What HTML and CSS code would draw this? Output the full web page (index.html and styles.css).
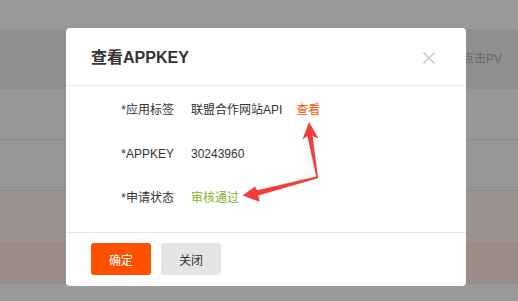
FILE: index.html
```html
<!DOCTYPE html>
<html lang="zh-CN">
<head>
<meta charset="utf-8">
<title>查看APPKEY</title>
<link rel="stylesheet" href="styles.css">
</head>
<body>
<div class="page">
  <div class="band band-top"></div>
  <div class="band band-head"><span class="head-text">点击PV</span></div>
  <div class="band band-row1"></div>
  <div class="band band-row2"></div>
  <div class="band band-row3"></div>
  <div class="band band-row4"></div>
  <div class="band band-bottom"></div>

  <div class="modal">
    <div class="modal-header">
      <h2 class="modal-title">查看APPKEY</h2>
      <span class="modal-close">
        <svg width="12" height="12" viewBox="0 0 12 12"><path d="M0.5 0.5 L11.5 11.5 M11.5 0.5 L0.5 11.5" stroke="#cccccc" stroke-width="1.6" fill="none"/></svg>
      </span>
    </div>
    <div class="modal-body">
      <div class="row">
        <span class="label">*应用标签</span>
        <span class="value">联盟合作网站API</span>
        <span class="link">查看</span>
      </div>
      <div class="row">
        <span class="label">*APPKEY</span>
        <span class="value">30243960</span>
      </div>
      <div class="row">
        <span class="label">*申请状态</span>
        <span class="value status">审核通过</span>
      </div>
    </div>
    <div class="modal-footer">
      <button class="btn btn-primary">确定</button>
      <button class="btn btn-default">关闭</button>
    </div>
  </div>

  <svg class="arrows" width="518" height="301" viewBox="0 0 518 301">
    <polygon points="309,122 318.5,138.5 312.6,136 318,177.5 316.4,177.5 307.4,136 302.5,139.5" fill="#f43d3d"/>
    <polygon points="242.5,195.5 255,186.5 257,190.3 317.5,176.2 318,178.2 258.3,195.6 259.8,201.8" fill="#f43d3d"/>
  </svg>
</div>
</body>
</html>
```

FILE: styles.css
```css
* { box-sizing: border-box; }
html, body {
  margin: 0;
  padding: 0;
}
body {
  font-family: "Liberation Sans", "Noto Sans CJK SC", sans-serif;
  font-size: 12px;
  color: #333;
  background: #999999;
}
.page {
  position: relative;
  width: 518px;
  height: 301px;
  overflow: hidden;
  display: flex;
  flex-direction: column;
}
.band { flex: none; width: 100%; }
.band-top { height: 29px; background: #999999; }
.band-head {
  height: 60px;
  background: #8f8f8f;
  display: flex;
  align-items: center;
  padding-left: 462px;
}
.head-text { color: #686868; font-size: 12px; line-height: 14px; margin-top: -1px; }
.band-row1 { height: 51px; background: #979797; border-bottom: 1px solid #8a8a8a; }
.band-row2 { height: 51px; background: #969696; border-bottom: 1px solid #8a8a8a; }
.band-row3 { height: 51px; background: #9a9390; }
.band-row4 { height: 42px; background: #9b8c88; }
.band-bottom { flex: 1; background: #999999; }

.modal {
  position: absolute;
  left: 66px;
  top: 28px;
  width: 400px;
  height: 258px;
  background: #fff;
  border-radius: 4px;
  display: flex;
  flex-direction: column;
}
.modal-header {
  height: 58px;
  border-bottom: 1px solid #e8e8e8;
  display: flex;
  align-items: center;
  justify-content: space-between;
  padding: 0 31px 0 25px;
}
.modal-title {
  margin: 0;
  font-size: 16px;
  font-weight: bold;
  color: #333;
  line-height: 20px;
  margin-top: 2px;
}
.modal-close { display: flex; width: 12px; height: 12px; margin-top: 2px; }

.modal-body {
  height: 147px;
  padding: 14px 25px 0 25px;
  display: flex;
  flex-direction: column;
  gap: 24px;
  border-bottom: 1px solid #e8e8e8;
}
.row {
  display: flex;
  align-items: center;
  height: 20px;
  line-height: 20px;
}
.label {
  width: 83px;
  text-align: right;
  color: #333;
}
.value { margin-left: 17px; color: #333; }
.link { margin-left: 14px; color: #ff5000; }
.status { color: #8cb02a; }

.modal-footer {
  flex: 1;
  display: flex;
  align-items: flex-start;
  gap: 10px;
  padding: 10px 25px 0 25px;
}
.btn {
  width: 60px;
  height: 32px;
  border: none;
  border-radius: 3px;
  font-family: "Liberation Sans", "Noto Sans CJK SC", sans-serif;
  font-size: 12px;
  padding: 0;
}
.btn-primary { background: #ff5000; color: #fff; }
.btn-default { background: #e5e5e5; color: #333; }

.arrows {
  position: absolute;
  left: 0;
  top: 0;
  pointer-events: none;
}
```
